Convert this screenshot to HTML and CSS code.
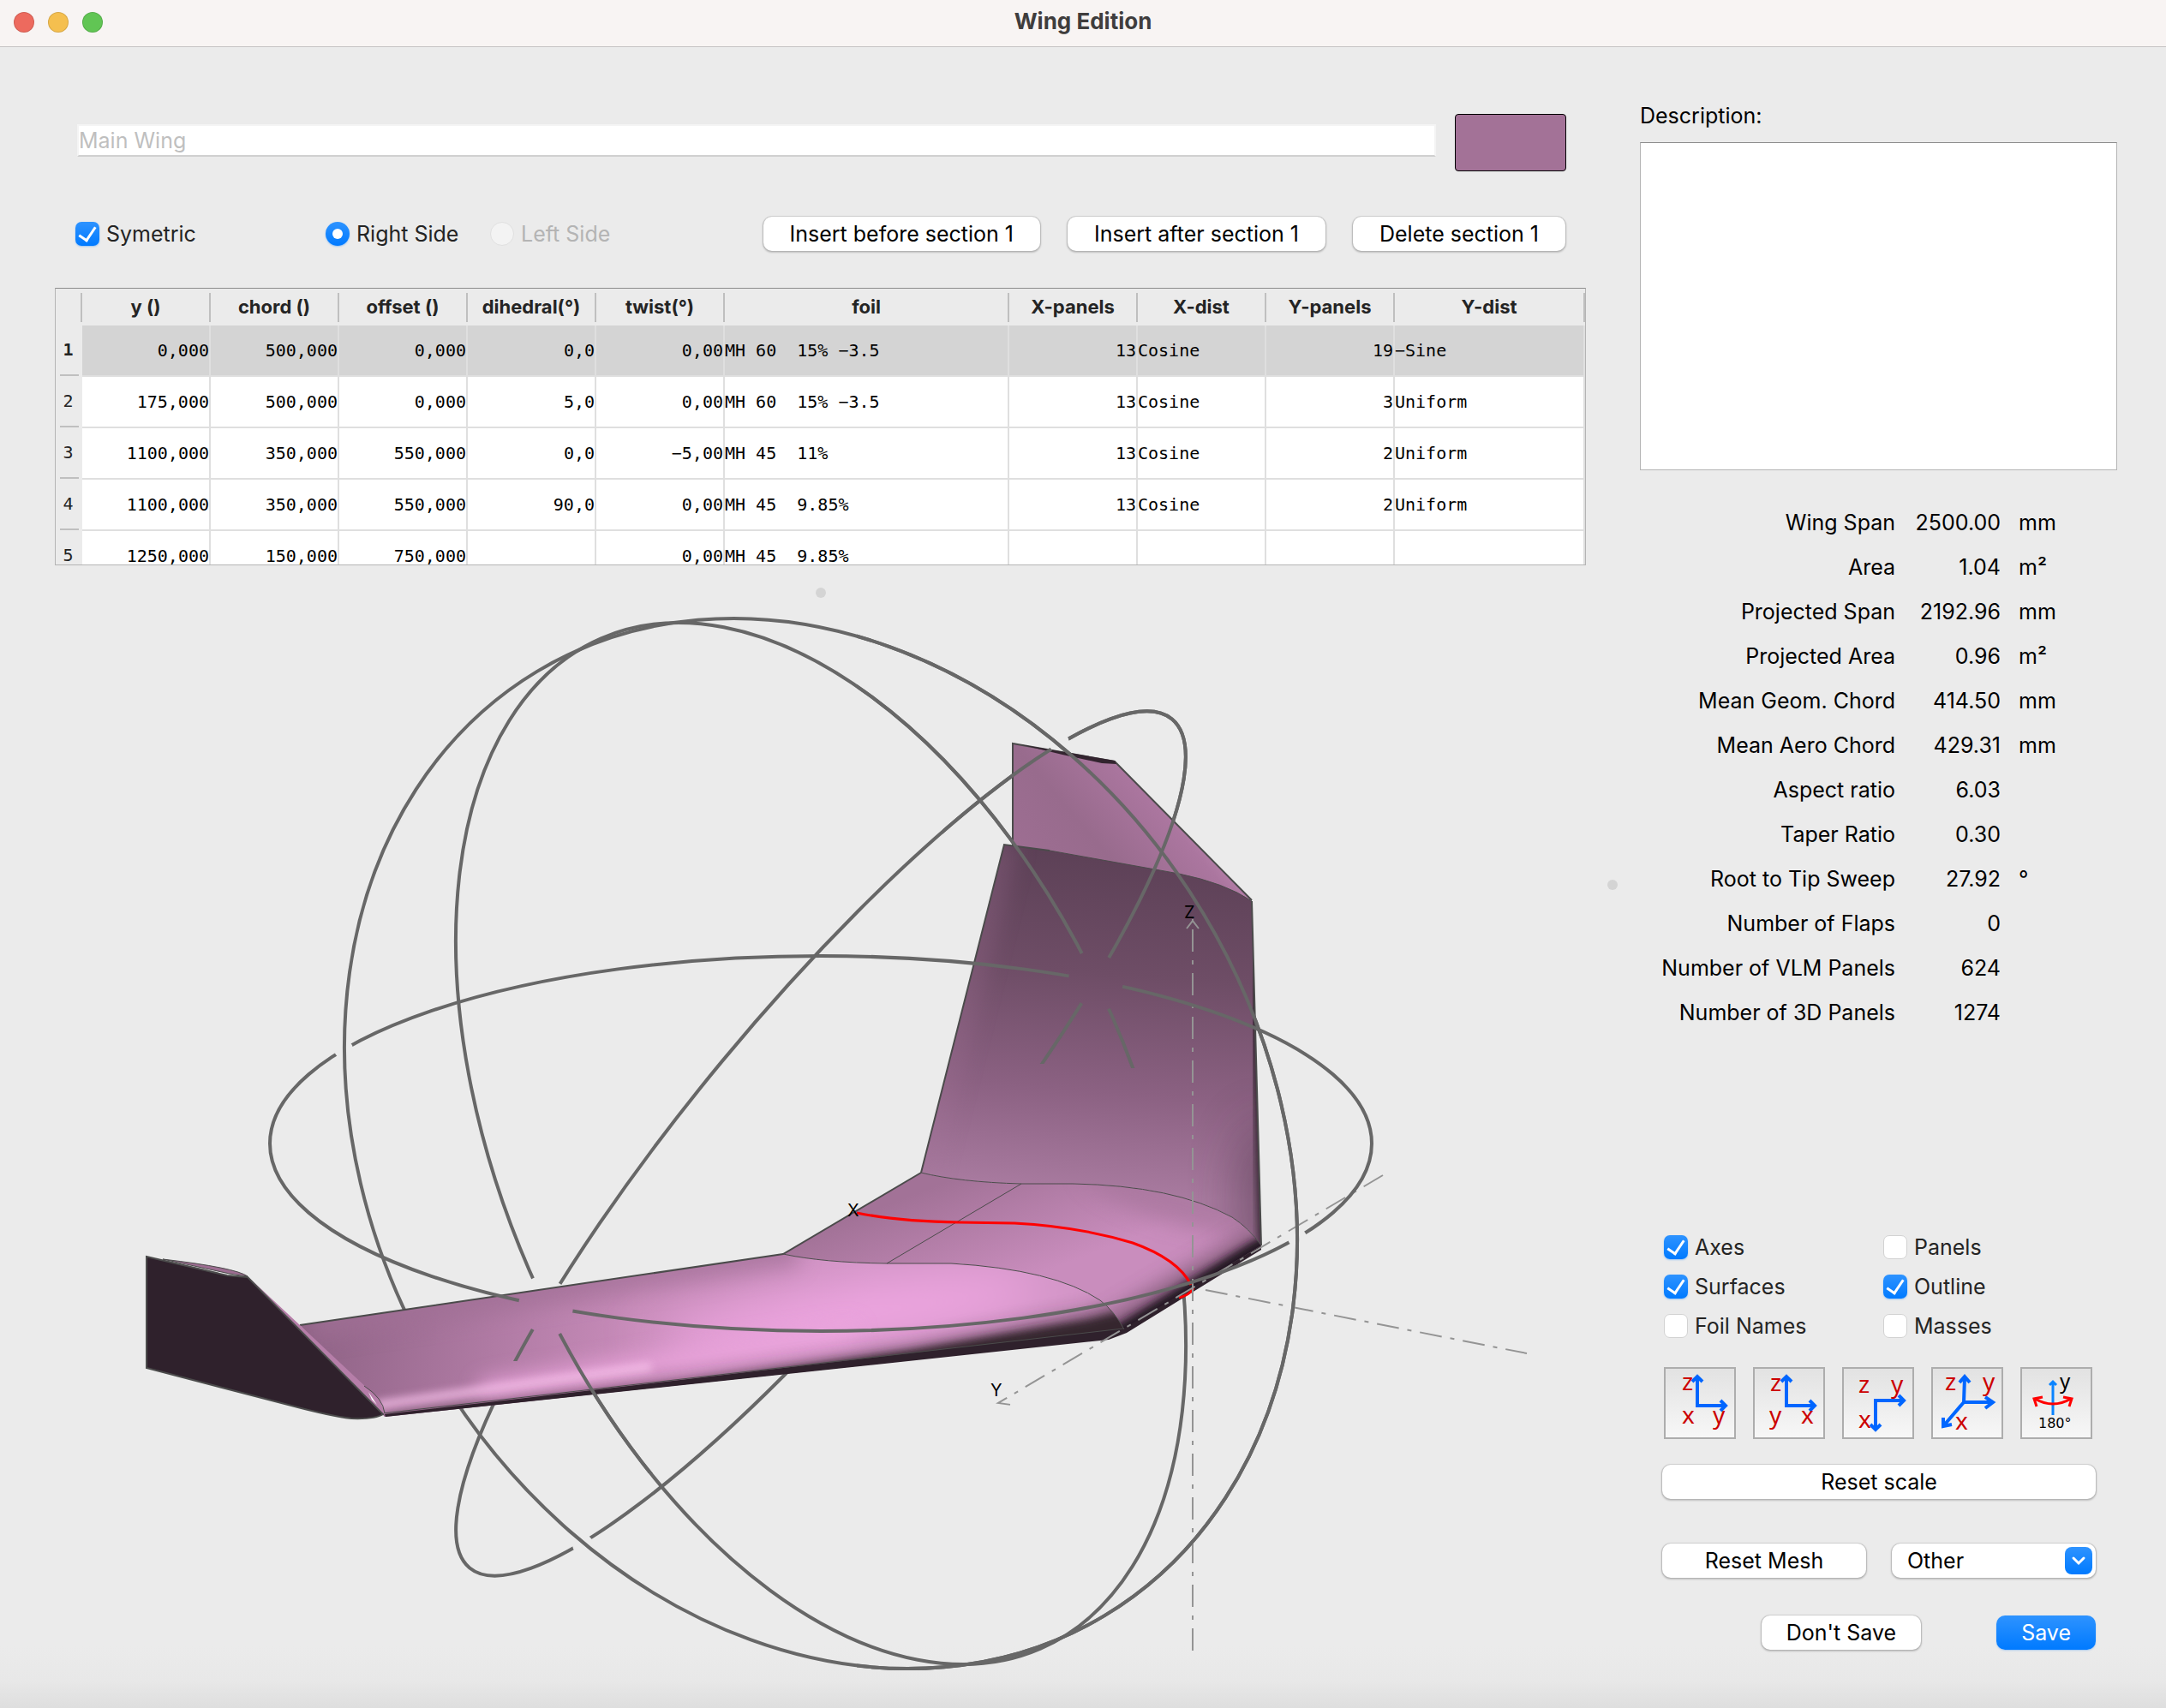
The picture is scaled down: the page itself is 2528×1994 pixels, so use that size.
FILE: index.html
```html
<!DOCTYPE html>
<html lang="en">
<head>
<meta charset="utf-8">
<title>Wing Edition</title>
<link rel="stylesheet" href="styles.css">
</head>
<body>
<header class="titlebar">
  <span class="lights"><i class="light red"></i><i class="light amber"></i><i class="light green"></i></span>
  <h1>Wing Edition</h1>
</header>
<main class="window">
  <section class="left">
    <div class="name-row">
      <input class="name" type="text" placeholder="Main Wing" aria-label="Wing name">
      <button class="swatch" type="button" aria-label="Wing color"></button>
    </div>
    <div class="controls">
      <label class="opt symetric"><input type="checkbox" checked>Symetric</label>
      <label class="opt right-side"><input type="radio" name="side" checked>Right Side</label>
      <label class="opt off"><input type="radio" name="side" disabled>Left Side</label>
      <div class="section-buttons">
        <button class="btn" type="button">Insert before section 1</button>
        <button class="btn" type="button">Insert after section 1</button>
        <button class="btn" type="button">Delete section 1</button>
      </div>
    </div>
    <div class="table-box">
      <table>
        <colgroup><col class="c-row"><col class="c-num"><col class="c-num"><col class="c-num"><col class="c-num"><col class="c-num"><col class="c-foil"><col class="c-num"><col class="c-num"><col class="c-num"><col></colgroup>
        <thead><tr><td></td><th>y ()</th><th>chord ()</th><th>offset ()</th><th>dihedral(°)</th><th>twist(°)</th><th>foil</th><th>X-panels</th><th>X-dist</th><th>Y-panels</th><th>Y-dist</th></tr></thead>
        <tbody>
          <tr class="selected"><th>1</th><td class="n">0,000</td><td class="n">500,000</td><td class="n">0,000</td><td class="n">0,0</td><td class="n">0,00</td><td>MH 60  15% −3.5</td><td class="n">13</td><td>Cosine</td><td class="n">19</td><td>−Sine</td></tr>
          <tr><th>2</th><td class="n">175,000</td><td class="n">500,000</td><td class="n">0,000</td><td class="n">5,0</td><td class="n">0,00</td><td>MH 60  15% −3.5</td><td class="n">13</td><td>Cosine</td><td class="n">3</td><td>Uniform</td></tr>
          <tr><th>3</th><td class="n">1100,000</td><td class="n">350,000</td><td class="n">550,000</td><td class="n">0,0</td><td class="n">−5,00</td><td>MH 45  11%</td><td class="n">13</td><td>Cosine</td><td class="n">2</td><td>Uniform</td></tr>
          <tr><th>4</th><td class="n">1100,000</td><td class="n">350,000</td><td class="n">550,000</td><td class="n">90,0</td><td class="n">0,00</td><td>MH 45  9.85%</td><td class="n">13</td><td>Cosine</td><td class="n">2</td><td>Uniform</td></tr>
          <tr><th>5</th><td class="n">1250,000</td><td class="n">150,000</td><td class="n">750,000</td><td class="n"></td><td class="n">0,00</td><td>MH 45  9.85%</td><td></td><td></td><td></td><td></td></tr>
        </tbody>
      </table>
    </div>
    <div class="split-h"><i class="dot"></i></div>
    <svg class="scene" viewBox="0 700 1876 1294" role="img" aria-label="3D view of the wing">
      <defs>
        <filter id="b5" x="-50%" y="-50%" width="200%" height="200%"><feGaussianBlur stdDeviation="5"/></filter>
        <filter id="b12" x="-50%" y="-80%" width="200%" height="260%"><feGaussianBlur stdDeviation="12"/></filter>
        <filter id="b30" x="-80%" y="-150%" width="260%" height="400%"><feGaussianBlur stdDeviation="28"/></filter>
        <linearGradient id="gPanel" gradientUnits="userSpaceOnUse" x1="1300" y1="1000" x2="1270" y2="1390">
          <stop offset="0" stop-color="#5d4157"/><stop offset=".35" stop-color="#6e4d66"/><stop offset=".7" stop-color="#8b6182"/><stop offset="1" stop-color="#a87a9f"/>
        </linearGradient>
        <linearGradient id="gFin" gradientUnits="userSpaceOnUse" x1="1220" y1="1030" x2="1385" y2="890">
          <stop offset="0" stop-color="#9d6e92"/><stop offset=".35" stop-color="#986b8d"/><stop offset=".72" stop-color="#ab769f"/><stop offset=".88" stop-color="#be88b0"/><stop offset="1" stop-color="#a57399"/>
        </linearGradient>
        <linearGradient id="gMid" gradientUnits="userSpaceOnUse" x1="1130" y1="1370" x2="1180" y2="1500">
          <stop offset="0" stop-color="#a27297"/><stop offset="1" stop-color="#c98dbd"/>
        </linearGradient>
        <linearGradient id="gWing" gradientUnits="userSpaceOnUse" x1="340" y1="1540" x2="1000" y2="1640">
          <stop offset="0" stop-color="#8c6183"/><stop offset=".25" stop-color="#a5739a"/><stop offset=".6" stop-color="#c88cba"/><stop offset="1" stop-color="#d395c7"/>
        </linearGradient>
        <clipPath id="cPanel"><path d="M1172 986L1225 993L1376 1020Q1430 1031 1461 1052L1472 1454Q1458 1434 1438 1421Q1370 1384 1252 1382L1192 1382Q1120 1380 1075 1369Z"/></clipPath>
        <clipPath id="cMid"><path d="M1075 1369Q1120 1380 1192 1382L1252 1382Q1370 1384 1438 1421Q1458 1434 1472 1454L1312 1552Q1300 1530 1284 1518Q1230 1482 1110 1475L1035 1475Q960 1474 914 1464Z"/></clipPath>
        <clipPath id="cWing"><path d="M350 1547L914 1464Q960 1474 1035 1475L1110 1475Q1230 1482 1284 1518Q1300 1530 1312 1552L1294 1563L449 1654Z"/></clipPath>
        <clipPath id="cFront1"><path d="M1000 700H1876V1994H1000Z"/></clipPath>
        <clipPath id="cFront3"><path d="M1000 700H1340V1247H1000ZM640 1540H800V1720H640Z"/></clipPath>
        <clipPath id="cFront4"><path d="M1100 700H1500V1242H1100ZM598 1500H645V1589H598Z"/></clipPath>
        <mask id="m2" maskUnits="userSpaceOnUse" x="0" y="700" width="1876" height="1294"><path fill="#fff" d="M0 700H1876V1994H0Z"/><circle cx="401" cy="1225" r="11"/><circle cx="1514" cy="1445" r="11"/><circle cx="1279" cy="1145" r="32"/><circle cx="637" cy="1525" r="32"/></mask>
        <mask id="m3" maskUnits="userSpaceOnUse" x="0" y="700" width="1876" height="1294"><path fill="#fff" d="M0 700H1876V1994H0Z"/><circle cx="1279" cy="1145" r="36"/><circle cx="637" cy="1525" r="36"/></mask>
        <mask id="m4" maskUnits="userSpaceOnUse" x="0" y="700" width="1876" height="1294"><path fill="#fff" d="M0 700H1876V1994H0Z"/><circle cx="1279" cy="1145" r="31"/><circle cx="637" cy="1525" r="31"/><circle cx="1236" cy="867" r="12"/><circle cx="680" cy="1803" r="12"/></mask>
        <ellipse id="e1" cx="958" cy="1335" rx="521" ry="643" transform="rotate(-31 958 1335)"/>
        <g id="e2" mask="url(#m2)"><ellipse cx="958" cy="1335" rx="643" ry="219"/></g>
        <g id="e3" mask="url(#m3)"><ellipse cx="958" cy="1335" rx="371" ry="643" transform="rotate(-23.5 958 1335)"/></g>
        <g id="e4" mask="url(#m4)"><ellipse cx="958" cy="1335" rx="150" ry="643" transform="rotate(39.6 958 1335)"/></g>
      </defs>

      <!-- arcball, far side -->
      <g class="ball"><use href="#e1"/><use href="#e3"/><use href="#e4"/></g>

      <!-- right winglet -->
      <path fill="url(#gFin)" d="M1182 868L1301 889L1461 1051L1376 1020L1182 990Z"/>
      <path class="edge" d="M1182 990V868L1301 889L1461 1051"/>
      <path fill="#33242f" d="M1190 869L1301 888L1303 892L1286 891L1240 881Z"/>

      <!-- right panel -->
      <g clip-path="url(#cPanel)">
        <path fill="url(#gPanel)" d="M1060 960H1490V1470H1060Z"/>
        <path d="M1165 980L1065 1380" stroke="#a5749a" stroke-width="50" opacity=".25" filter="url(#b12)"/>
        <path d="M1468 1040L1480 1470" stroke="#2f212c" stroke-width="22" filter="url(#b5)"/>
        <ellipse cx="1480" cy="1400" rx="36" ry="90" fill="#4a3345" opacity=".5" filter="url(#b30)"/>
      </g>
      <path class="edge" d="M1075 1369L1172 986L1225 993M1461 1052L1472 1454"/>
      <path class="edge thin" d="M1225 993L1376 1020Q1430 1031 1461 1052"/>

      <!-- centre section -->
      <g clip-path="url(#cMid)">
        <path fill="url(#gMid)" d="M900 1360H1480V1570H900Z"/>
        <ellipse cx="1380" cy="1400" rx="120" ry="30" fill="#a9779e" opacity=".8" filter="url(#b12)" transform="rotate(15 1380 1400)"/>
        <path d="M1290 1584L1490 1466" stroke="#694961" stroke-width="80" opacity=".7" filter="url(#b12)"/>
        <path d="M1300 1569L1490 1452" stroke="#241820" stroke-width="34" filter="url(#b5)"/>
      </g>

      <!-- left panel -->
      <g clip-path="url(#cWing)">
        <path fill="url(#gWing)" d="M340 1440H1330V1670H340Z"/>
        <path d="M360 1535L930 1450" stroke="#a06f95" stroke-width="60" opacity=".7" filter="url(#b12)"/>
        <ellipse cx="990" cy="1535" rx="230" ry="30" fill="#f2a8e4" filter="url(#b30)" transform="rotate(-8 990 1535)"/>
        <path d="M560 1625L1000 1556" stroke="#eca6de" stroke-width="26" opacity=".8" filter="url(#b12)"/>
        <path d="M440 1641L760 1596" stroke="#f5bde8" stroke-width="12" opacity=".8" filter="url(#b5)"/>
        <path d="M455 1658L800 1614L1060 1574L1270 1533L1330 1510V1600L449 1670Z" fill="#35252f" opacity=".6" filter="url(#b12)"/>
        <path d="M455 1658L800 1615L1060 1577L1270 1541L1330 1526V1600L449 1670Z" fill="#35252f" filter="url(#b5)"/>
      </g>
      <path fill="#2f212c" d="M449 1651L1311 1551L1472 1454V1459L1315 1556L1294 1564L450 1654Z"/>
      <path class="edge" d="M350 1547L914 1464L1075 1369"/>
      <path class="edge thin" d="M447 1650L1311 1551M914 1464Q960 1474 1035 1475L1110 1475Q1230 1482 1284 1518Q1300 1530 1312 1552M1075 1369Q1120 1380 1192 1382L1252 1382Q1370 1384 1438 1421Q1458 1434 1472 1454M1192 1382L1035 1475"/>

      <!-- left winglet -->
      <path fill="#b67ea9" d="M289 1490L350 1547L430 1622Q447 1636 449 1652Z"/>
      <path fill="#fff" d="M430 1625L440 1640L434 1634Z"/>
      <path class="edge thin" d="M425 1618Q447 1632 449 1650"/>
      <path fill="#2f212c" stroke="#4b4b4b" stroke-width="2" d="M171 1467L265 1489L289 1491L447 1651Q438 1657 410 1656Q385 1653 340 1641L171 1597Z"/>
      <path fill="#9c6d91" stroke="#4b4b4b" d="M190 1470Q275 1480 289 1490L268 1487Z"/>

      <!-- root foil -->
      <path d="M1000 1416Q1050 1426 1120 1427L1184 1428Q1260 1432 1322 1451Q1375 1470 1390 1500M1393 1504Q1388 1512 1376 1515" fill="none" stroke="#f00" stroke-width="3"/>

      <!-- axes -->
      <g class="axis">
        <path d="M1392 1927V1073"/><path d="M1385 1084L1392 1075L1399 1084"/>
        <path d="M1407 1506L1782 1580"/>
        <path d="M1614 1372L1165 1638L1180 1640"/>
      </g>

      <!-- arcball, near side -->
      <g class="ball">
        <g clip-path="url(#cFront1)"><use href="#e1"/></g>
        <use href="#e2"/>
        <g clip-path="url(#cFront3)"><use href="#e3"/></g>
        <g clip-path="url(#cFront4)"><use href="#e4"/></g>
      </g>
      <g class="axis-label"><text x="1382" y="1072">Z</text><text x="989" y="1420">X</text><text x="1156" y="1630">Y</text></g>
    </svg>
  </section>
  <div class="split-v"><i class="dot"></i></div>
  <aside class="right">
    <label class="desc-label" for="desc">Description:</label>
    <textarea id="desc"></textarea>
    <table class="stats">
      <tr><th>Wing Span</th><td>2500.00</td><td>mm</td></tr>
      <tr><th>Area</th><td>1.04</td><td>m²</td></tr>
      <tr><th>Projected Span</th><td>2192.96</td><td>mm</td></tr>
      <tr><th>Projected Area</th><td>0.96</td><td>m²</td></tr>
      <tr><th>Mean Geom. Chord</th><td>414.50</td><td>mm</td></tr>
      <tr><th>Mean Aero Chord</th><td>429.31</td><td>mm</td></tr>
      <tr><th>Aspect ratio</th><td>6.03</td><td></td></tr>
      <tr><th>Taper Ratio</th><td>0.30</td><td></td></tr>
      <tr><th>Root to Tip Sweep</th><td>27.92</td><td>°</td></tr>
      <tr><th>Number of Flaps</th><td>0</td><td></td></tr>
      <tr><th>Number of VLM Panels</th><td>624</td><td></td></tr>
      <tr><th>Number of 3D Panels</th><td>1274</td><td></td></tr>
    </table>
    <div class="panel">
      <div class="checks">
        <label class="opt"><input type="checkbox" checked>Axes</label>
        <label class="opt"><input type="checkbox">Panels</label>
        <label class="opt"><input type="checkbox" checked>Surfaces</label>
        <label class="opt"><input type="checkbox" checked>Outline</label>
        <label class="opt"><input type="checkbox">Foil Names</label>
        <label class="opt"><input type="checkbox">Masses</label>
      </div>
      <div class="views">
        <button type="button" class="view" aria-label="Front view"><svg viewBox="0 0 84 84"><path class="ax" d="M39 12V45H71M33 17L39 11L45 17M66 39L72 45L66 51"/><text x="21" y="27">z</text><text x="21" y="66">x</text><text x="57" y="66">y</text></svg></button>
        <button type="button" class="view" aria-label="Side view"><svg viewBox="0 0 84 84"><path class="ax" d="M39 12V45H71M33 17L39 11L45 17M66 39L72 45L66 51"/><text x="20" y="28">z</text><text x="19" y="66">y</text><text x="56" y="66">x</text></svg></button>
        <button type="button" class="view" aria-label="Top view"><svg viewBox="0 0 84 84"><path class="ax" d="M39 72V39H71M33 67L39 73L45 67M66 33L72 39L66 45"/><text x="19" y="30">z</text><text x="19" y="71">x</text><text x="57" y="30">y</text></svg></button>
        <button type="button" class="view" aria-label="Isometric view"><svg viewBox="0 0 84 84"><path class="ax" d="M39 12L38 41H71M33 18L39 11L45 18M63 35L72 41L63 48M38 41L14 69M14 59V69L24 67"/><text x="16" y="27">z</text><text x="28" y="73">x</text><text x="60" y="27">y</text></svg></button>
        <button type="button" class="view" aria-label="Flip 180 degrees"><svg viewBox="0 0 84 84"><path d="M38 18V56M34 21L38 17L42 21" fill="none" stroke="#0a84ff" stroke-width="3"/><path d="M17 37Q38 49 59 37M26 35L16 37L19 46M50 35L60 37L57 46" fill="none" stroke="#f00" stroke-width="3"/><text class="blk" x="46" y="25">y</text><text class="deg" x="21" y="71">180°</text></svg></button>
      </div>
      <button class="btn reset-scale" type="button">Reset scale</button>
      <div class="mesh">
        <button class="btn" type="button">Reset Mesh</button>
        <span class="combo"><select aria-label="View"><option>Other</option></select><svg viewBox="0 0 32 32" aria-hidden="true"><path d="M10 13L16 19L22 13"/></svg></span>
      </div>
      <div class="actions">
        <button class="btn dont" type="button">Don't Save</button>
        <button class="btn primary" type="button">Save</button>
      </div>
    </div>
  </aside>
</main>
</body>
</html>
```
FILE: styles.css
```css
* { box-sizing: border-box; }
body {
  margin: 0;
  min-height: 100vh;
  display: flex;
  flex-direction: column;
  background: #ebebeb linear-gradient(to top, #dedede, #e8e8e8 32px, #ebebeb 72px) no-repeat;
  font-family: Inter, "Liberation Sans", sans-serif;
  font-size: 25px;
  line-height: 32px;
  color: #000;
}
button, input, select, textarea { font: inherit; color: inherit; margin: 0; }

.titlebar {
  position: relative;
  height: 55px;
  display: flex;
  align-items: center;
  justify-content: center;
  background: #f8f4f3;
  border-bottom: 1px solid #c6c4c4;
  padding-bottom: 4px;
}
.titlebar h1 { margin: 0; font-size: 26px; font-weight: 700; color: #3f3d3d; }
.lights { position: absolute; left: 16px; top: 14px; display: flex; gap: 16px; }
.light { width: 24px; height: 24px; border-radius: 50%; border: 1px solid rgba(0, 0, 0, .12); }
.red { background: #ed6a5e; }
.amber { background: #f5bf4f; }
.green { background: #61c554; }

.window { flex: 1; display: grid; grid-template-columns: 1fr 12px 640px; }

.left { min-width: 0; padding-top: 78px; }
.name-row { display: flex; align-items: center; gap: 22px; padding: 0 48px 0 90px; }
.name {
  flex: 1;
  height: 38px;
  margin-bottom: 6px;
  padding: 0;
  background: #fff;
  border: 2px solid #f4f4f4;
  border-bottom-color: #d0d0d0;
}
.name::placeholder { color: #bfbfbf; opacity: 1; }
.swatch { width: 130px; height: 67px; background: #a37297; border: 1px solid #000; border-radius: 4px; }

.controls { display: flex; align-items: center; padding: 53px 49px 43px 88px; }
.opt { display: flex; align-items: center; gap: 8px; color: #242424; white-space: nowrap; }
.symetric { width: 292px; }
.right-side { width: 192px; }
.off { color: #b4b4b4; }
.section-buttons { display: flex; gap: 32px; margin-left: auto; }

.opt input {
  appearance: none;
  width: 28px;
  height: 28px;
  flex: none;
  border-radius: 7px;
  background: #fff;
  border: 1px solid #d2d2d2;
  display: grid;
  place-items: center;
}
.opt input:checked {
  border: 0;
  background: linear-gradient(#2e93ff, #007aff);
  box-shadow: 0 1px 2px rgba(0, 122, 255, .35);
}
.opt input[type="checkbox"]:checked::before {
  content: "";
  width: 9px;
  height: 17px;
  margin-bottom: 4px;
  border: solid #fff;
  border-width: 0 3px 3px 0;
  transform: rotate(34deg);
}
.opt input[type="radio"] { border-radius: 50%; }
.opt input[type="radio"]:checked::before { content: ""; width: 12px; height: 12px; border-radius: 50%; background: #fff; }
.opt input:disabled { background: #f3f3f3; border-color: #e0e0e0; }

.btn {
  height: 40px;
  padding: 0 29px;
  border: 0;
  border-radius: 10px;
  background: #fff;
  box-shadow: 0 0 0 1px rgba(0, 0, 0, .07), 0 1px 2px 1px rgba(0, 0, 0, .18);
  white-space: nowrap;
}

.section-buttons .btn { padding: 0 31px; }

.table-box {
  margin: 0 25px 0 64px;
  height: 324px;
  overflow: hidden;
  border: 1px solid #b4b4b4;
  border-top-color: #8c8c8c;
}
.table-box table { width: 100%; table-layout: fixed; border-collapse: separate; border-spacing: 0; }
.c-row { width: 31px; }
.c-num { width: 150px; }
.c-foil { width: 332px; }
.table-box thead tr { height: 43px; }
.table-box thead th, .table-box thead td {
  padding: 0 2px 2px 0;
  font-size: 22px;
  font-weight: 700;
  color: #242424;
  line-height: 32px;
  background: linear-gradient(#bfbfbf, #bfbfbf) right center / 2px 34px no-repeat;
}
.table-box tbody { font: 20px/24px "DejaVu Sans Mono", "Liberation Mono", monospace; }
.table-box tbody tr { height: 60px; }
.table-box tbody td {
  padding: 0;
  white-space: pre;
  background: #fff;
  border-right: 2px solid #dfdfdf;
  border-bottom: 2px solid #dfdfdf;
}
.table-box tbody th {
  padding: 0 2px 4px 0;
  font-weight: 400;
  color: #242424;
  background: linear-gradient(#bfbfbf, #bfbfbf) center bottom 1px / 22px 2px no-repeat;
}
.table-box .selected th { font-weight: 700; }
.table-box .selected td { background: #d4d4d4; }
.table-box .n { text-align: right; }

.split-h { display: flex; justify-content: center; padding: 26px 0 2px; margin-left: 40px; }
.split-v { display: flex; align-items: center; justify-content: center; padding-top: 16px; }
.dot { width: 12px; height: 12px; border-radius: 50%; background: #d4d4d4; }

.scene { display: block; width: 100%; height: auto; }
.ball { fill: none; stroke: #676767; stroke-width: 4; }
.edge { fill: none; stroke: #4b4b4b; stroke-width: 2; }
.edge.thin { stroke-width: 1; }
.axis { fill: none; stroke: #949494; stroke-width: 2; stroke-dasharray: 26 10 5 10; }
.axis-label { font: 20px Inter, sans-serif; fill: #000; }

.right { padding: 64px 57px 0 26px; display: flex; flex-direction: column; }
.desc-label { margin-bottom: 15px; }
textarea {
  height: 383px;
  resize: none;
  background: #fff;
  border: 1px solid #b4b4b4;
  border-top-color: #8c8c8c;
}
.stats { margin-top: 35px; border-collapse: collapse; }
.stats tr { height: 52px; }
.stats th, .stats td { padding: 0; }
.stats th { width: 298px; font-weight: 400; text-align: right; white-space: nowrap; }
.stats td { width: 123px; text-align: right; }
.stats td:last-child { width: auto; padding-left: 21px; text-align: left; }

.panel { display: flex; flex-direction: column; padding: 232px 25px 0 26px; }
.checks { display: grid; grid-template-columns: 256px 1fr; row-gap: 14px; padding: 0 2px; }
.views { display: flex; gap: 20px; padding: 32px 2px 30px; }
.view {
  width: 84px;
  height: 84px;
  padding: 0;
  border: 2px solid #adadad;
  background: linear-gradient(#e2e2e2, #f7f7f7);
}
.view svg { display: block; width: 84px; height: 84px; margin: -2px; overflow: visible; }
.view text { font: 28px "Noto Sans", sans-serif; fill: #c00; }
.view .blk { font-size: 24px; fill: #000; }
.view .deg { font: 16px "DejaVu Sans", sans-serif; fill: #000; }
.ax { fill: none; stroke: #06f; stroke-width: 4; }

.mesh { display: grid; grid-template-columns: 1fr 1fr; gap: 30px; margin-top: 52px; }
.combo { position: relative; display: block; }
.combo select {
  appearance: none;
  width: 100%;
  height: 40px;
  padding: 0 18px;
  border: 0;
  border-radius: 10px;
  background: #fff;
  box-shadow: 0 0 0 1px rgba(0, 0, 0, .07), 0 1px 2px 1px rgba(0, 0, 0, .18);
}
.combo svg {
  position: absolute;
  right: 4px;
  top: 4px;
  width: 32px;
  height: 32px;
  border-radius: 8px;
  background: linear-gradient(#2e93ff, #007aff);
  fill: none;
  stroke: #fff;
  stroke-width: 3;
  stroke-linecap: round;
  pointer-events: none;
}
.actions { display: flex; justify-content: flex-end; gap: 88px; margin-top: 44px; }
.primary { background: linear-gradient(#2e93ff, #007aff); color: #fff; box-shadow: 0 1px 2px rgba(0, 122, 255, .3); }
```
